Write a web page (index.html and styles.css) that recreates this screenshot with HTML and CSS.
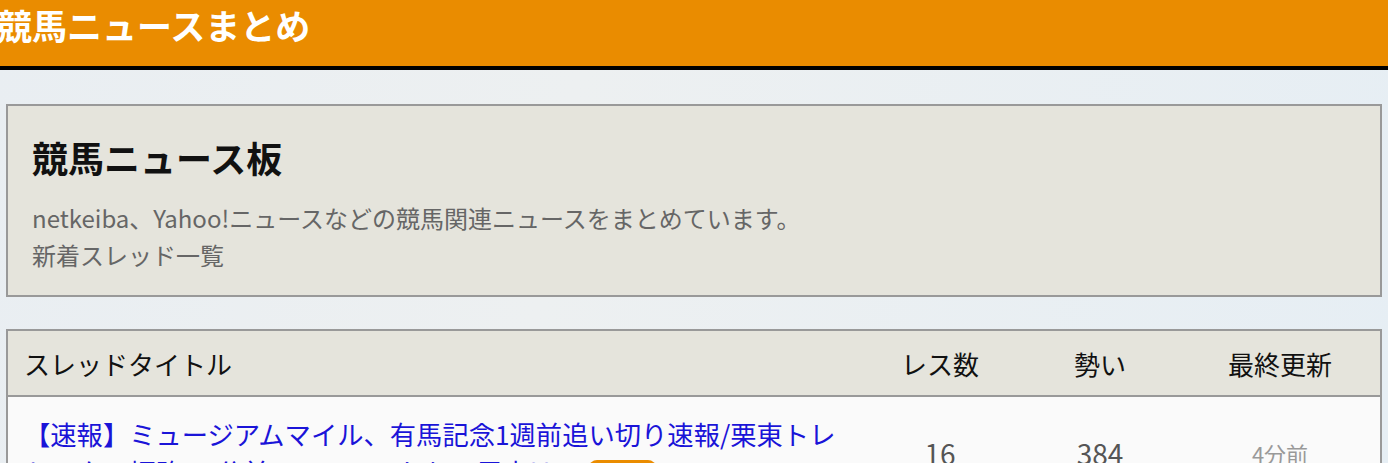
FILE: index.html
```html
<!DOCTYPE html>
<html lang="ja">
<head>
<meta charset="utf-8">
<title>競馬ニュースまとめ</title>
<link rel="stylesheet" href="styles.css">
</head>
<body>
<header class="site-header">
  <h1 class="site-title">競馬ニュースまとめ</h1>
</header>
<main class="main">
  <section class="board-box">
    <h2 class="board-title">競馬ニュース板</h2>
    <p class="board-desc">netkeiba、Yahoo!ニュースなどの競馬関連ニュースをまとめています。<br>新着スレッド一覧</p>
  </section>
  <table class="thread-table">
    <thead>
      <tr>
        <th class="col-title">スレッドタイトル</th>
        <th class="col-num">レス数</th>
        <th class="col-num">勢い</th>
        <th class="col-time">最終更新</th>
      </tr>
    </thead>
    <tbody>
      <tr>
        <td class="cell-title"><a href="#" class="thread-link">【速報】ミュージアムマイル、有馬記念1週前追い切り速報/栗東トレセンター坂路 17分前 2.0 ファンたちの反応は？</a><span class="badge">NEW</span></td>
        <td class="cell-num">16</td>
        <td class="cell-num">384</td>
        <td class="cell-time">4分前</td>
      </tr>
    </tbody>
  </table>
</main>
</body>
</html>
```

FILE: styles.css
```css
html, body {
  margin: 0;
  padding: 0;
}
body {
  font-family: "Noto Sans CJK JP", "Noto Sans", sans-serif;
  background: linear-gradient(100deg, #e9eef2 0%, #edf0f1 40%, #e6eef4 100%);
  min-height: 463px;
}
.site-header {
  background: #ea8c00;
  height: 66px;
  border-bottom: 4px solid #000;
}
.site-title {
  margin: 0 0 0 -3px;
  font-size: 35px;
  line-height: 50px;
  font-weight: 700;
  color: #fff;
}
.main {
  padding: 34px 6px 0;
  display: flex;
  flex-direction: column;
  gap: 32px;
}
.board-box {
  background: #e5e4dc;
  border: 2px solid #999;
  padding: 27px 24px 22px;
}
.board-title {
  margin: 0;
  font-size: 36px;
  line-height: 48px;
  font-weight: 700;
  color: #111;
}
.board-desc {
  margin: 18px 0 0;
  font-size: 24px;
  line-height: 37px;
  color: #666;
}
.thread-table {
  width: 100%;
  border-collapse: collapse;
  border: 2px solid #999;
  background: #fafafa;
  table-layout: fixed;
}
.thread-table th {
  background: #e5e4dc;
  font-weight: 400;
  font-size: 26px;
  height: 64px;
  padding: 0;
  color: #111;
  border-bottom: 2px solid #999;
}
.col-title {
  text-align: left;
  padding-left: 16px !important;
}
.col-num {
  width: 160px;
  text-align: center;
}
.col-time {
  width: 200px;
  text-align: center;
}
.thread-table td {
  padding: 18px 0;
  vertical-align: middle;
}
.cell-title {
  padding: 18px 16px !important;
  font-size: 26.3px;
  line-height: 38px;
}
.thread-link {
  color: #1a14d8;
  text-decoration: none;
}
.badge {
  display: inline-block;
  margin-left: 8px;
  background: #ea8c00;
  color: #fff;
  font-size: 16px;
  line-height: 32px;
  padding: 0 16px;
  border-radius: 8px;
  vertical-align: middle;
}
.cell-num {
  text-align: center;
  font-size: 28px;
  color: #555;
}
.cell-time {
  text-align: center;
  font-size: 22px;
  color: #999;
}
```
